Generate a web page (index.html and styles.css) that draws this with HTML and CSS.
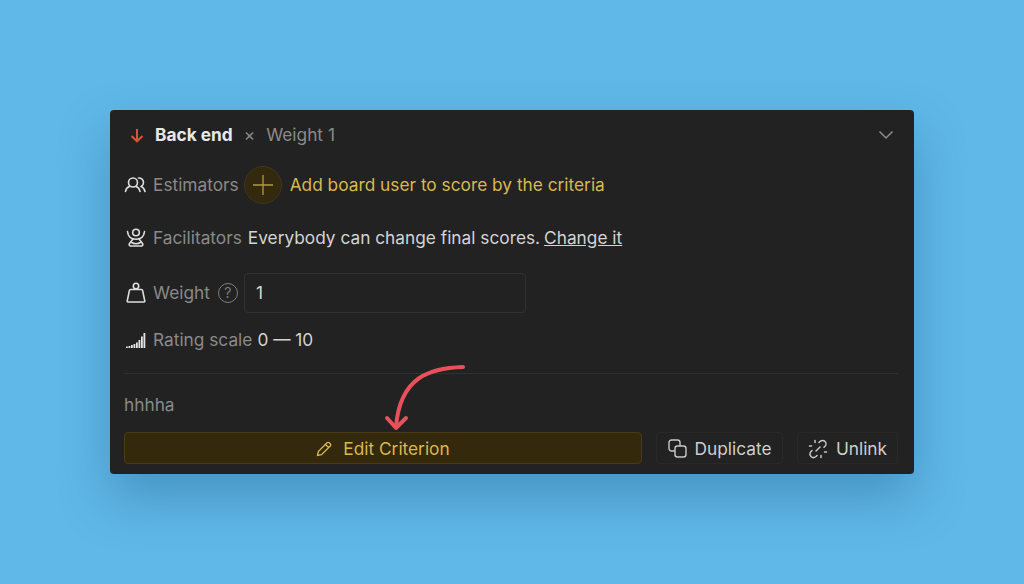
FILE: index.html
```html
<!DOCTYPE html>
<html lang="en">
<head>
	<meta charset="UTF-8">
	<title>Criterion</title>
	<link rel="stylesheet" href="styles.css">
</head>
<body>
	<div class="panel">
		<div class="head">
			<svg class="arrow-down" width="14" height="15" viewBox="0 0 14 15"><path d="M7 1v12M1.500 8 7 13.300 12.500 8" fill="none" stroke="#d2563a" stroke-width="2"/></svg>
			<b class="title">Back end</b>
			<span class="times">×</span>
			<span class="label">Weight 1</span>
			<svg class="chevron" width="16" height="10" viewBox="0 0 16 10"><path d="M1.500 1.500 8 8l6.500-6.500" fill="none" stroke="#8d8d8d" stroke-width="1.500"/></svg>
		</div>

		<div class="row row-est">
			<svg class="icon" width="24" height="18" viewBox="0 0 24 18" fill="none" stroke="#dedede" stroke-width="1.600" stroke-linecap="round"><circle cx="9" cy="6.500" r="4.500"/><path d="M1.500 15.500c.4-2.700 2-4.300 4-5M16 15.500c-.4-2.700-2-4.300-4-5"/><path d="M14.500 2c2.700-.3 5 1.600 5 4.500 0 1.700-.8 3.100-2.200 4 2 .9 3.200 2.600 3.700 5"/></svg>
			<span class="label">Estimators</span>
			<span class="add"><svg width="20" height="20" viewBox="0 0 20 20"><path d="M10 0v20M0 10h20" stroke="#b59a3c" stroke-width="1.300"/></svg></span>
			<span class="add-text">Add board user to score by the criteria</span>
		</div>

		<div class="row row-fac">
			<svg class="icon" width="24" height="20" viewBox="0 0 24 20" fill="none" stroke="#dedede" stroke-width="1.600" stroke-linecap="round" stroke-linejoin="round"><circle cx="12" cy="4.500" r="3.300"/><path d="M3.500 3.500c.5 5 4 7.700 8.500 7.700s8-2.700 8.500-7.700"/><path d="M9 11l-3.500 4.500c-.8 1.200-.2 2.500 1.200 2.500h10.600c1.400 0 2-1.300 1.200-2.500L15 11M7.500 14.500c3 1.600 6 1.600 9 0"/></svg>
			<span class="label">Facilitators</span>
			<span class="text">Everybody can change final scores.</span>
			<a class="link">Change it</a>
		</div>

		<div class="row row-weight">
			<svg class="icon" width="24" height="22" viewBox="0 0 24 22" fill="none" stroke="#dedede" stroke-width="1.600" stroke-linejoin="round"><circle cx="12" cy="4" r="2.700"/><path d="M6.500 7.500h11c.6 0 1 .3 1.100.9l2.200 10.700c.1.600-.3.900-.8.900H4c-.5 0-.9-.3-.8-.9L5.400 8.400c.1-.6.500-.9 1.100-.9z"/></svg>
			<span class="label">Weight</span>
			<span class="help">?</span>
			<div class="input">1</div>
		</div>

		<div class="row row-rating">
			<svg class="icon" width="24" height="18" viewBox="0 0 24 18" fill="#e4e4e4"><rect x="2" y="15.500" width="1.800" height="1.500"/><rect x="4.500" y="15" width="1.800" height="2"/><rect x="7" y="14" width="1.800" height="3"/><rect x="9.500" y="13" width="1.800" height="4"/><rect x="12" y="11.500" width="1.800" height="5.500"/><rect x="14.500" y="9" width="1.800" height="8"/><rect x="17" y="5.500" width="1.800" height="11.500"/><rect x="19.500" y="2" width="1.800" height="15"/></svg>
			<span class="label">Rating scale</span>
			<span class="text">0 — 10</span>
		</div>

		<div class="note">hhhha</div>

		<div class="actions">
			<button class="btn btn-edit">
				<svg width="16" height="16" viewBox="0 0 16 16" fill="none" stroke="#d9b94e" stroke-width="1.300"><path d="M1.500 14.500l.8-4L11 1.800c.7-.7 1.700-.7 2.300 0l.9.900c.7.700.7 1.700 0 2.300l-8.700 8.700zM9.500 3.500l3 3"/></svg>
				Edit Criterion
			</button>
			<button class="btn btn-dup">
				<svg width="19" height="19" viewBox="0 0 19 19" fill="none" stroke="#c8c8c8" stroke-width="1.400"><rect x="1" y="1" width="11" height="11" rx="2.500"/><rect x="7" y="7" width="11" height="11" rx="2.500" fill="#222"/></svg>
				Duplicate
			</button>
			<button class="btn btn-unlink">
				<svg width="20" height="20" viewBox="0 0 20 20" fill="none" stroke="#c8c8c8" stroke-width="1.500" stroke-linecap="round"><path d="M11 3.500l1-1c1.500-1.500 3.800-1.500 5 0 1.300 1.300 1.300 3.500 0 4.800l-1 1M9 16.500l-1 1c-1.500 1.300-3.700 1.300-5 0-1.400-1.300-1.400-3.500 0-5l1-1"/><path d="M8 12l4-4"/><path d="M1.500 7h2M7 1.500v2M16.500 13h2M13 16.500v2"/></svg>
				Unlink
			</button>
		</div>

		<svg class="callout" width="90" height="72" viewBox="0 0 90 72" fill="none" stroke="#e8505b" stroke-width="4" stroke-linecap="round" stroke-linejoin="round"><path d="M82 5C50 6 19 14 15 65"/><path d="M6 56 15 66 25 56"/></svg>
	</div>
</body>
</html>
```

FILE: styles.css
```css
*{margin: 0;padding: 0;box-sizing: border-box;}
body{
	width: 1024px;
	height: 584px;
	background: #5fb8e8;
	font: 17.300px/24px 'Inter', 'Liberation Sans', sans-serif;
	color: #d8d8d8;
	overflow: hidden;
	padding: 110px 110px 0;
}
.panel{
	position: relative;
	width: 804px;
	height: 364px;
	padding: 0 16px 10px 14px;
	background: #222;
	border-radius: 4px;
	box-shadow: 0 24px 50px rgba(30, 80, 120, .35);
	display: flex;
	flex-direction: column;
}
.head{
	height: 50px;
	display: flex;
	align-items: center;
	padding-left: 6px;
}
.title{
	margin-left: 11px;
	color: #e8e8e8;
	font-weight: 700;
}
.times{
	margin: 0 11px;
	color: #8a8a8a;
}
.label{
	color: #8a8a8a;
}
.chevron{
	margin-left: auto;
	margin-right: 4px;
}
.row{
	display: flex;
	align-items: center;
}
.icon{
	flex: none;
	margin-right: 5px;
}
.row-est{height: 50px;}
.row-fac{height: 56px;}
.row-weight{height: 54px;}
.row-rating{height: 40px;}
.add{
	flex: none;
	width: 38px;
	height: 38px;
	margin: 0 8px 0 5px;
	display: flex;
	align-items: center;
	justify-content: center;
	background: #33290f;
	border: 1px solid #41351a;
	border-radius: 50%;
}
.add-text{
	color: #d9b94e;
}
.text{
	margin-left: 5px;
	color: #d4d4d4;
}
.row-fac .text{
	margin-left: 6px;
}
.link{
	margin-left: 4px;
	color: #d4d4d4;
	text-decoration: underline;
}
.help{
	flex: none;
	width: 20px;
	height: 20px;
	margin: 0 6px 0 8px;
	border: 1.500px solid #7c7c7c;
	border-radius: 50%;
	color: #7c7c7c;
	font-size: 14px;
	line-height: 17px;
	text-align: center;
}
.input{
	width: 282px;
	height: 40px;
	padding-left: 11px;
	border: 1px solid #313131;
	border-radius: 4px;
	line-height: 38px;
}
.note{
	margin-top: 13px;
	height: 59px;
	padding-top: 19px;
	border-top: 1px solid #303030;
	color: #8a8a8a;
}
.actions{
	display: flex;
	gap: 14px;
}
.btn{
	height: 32px;
	padding-top: 1px;
	display: flex;
	align-items: center;
	justify-content: center;
	gap: 8px;
	background: transparent;
	border: 1px solid #292929;
	border-radius: 4px;
	font: inherit;
	color: #cfcfcf;
}
.btn-edit{
	width: 518px;
	gap: 11px;
	background: #35290d;
	border-color: #4a3b14;
	color: #d9b94e;
}
.btn-dup{
	width: 127px;
}
.btn-unlink{
	width: 101px;
}
.callout{
	position: absolute;
	left: 271px;
	top: 252px;
}
```
